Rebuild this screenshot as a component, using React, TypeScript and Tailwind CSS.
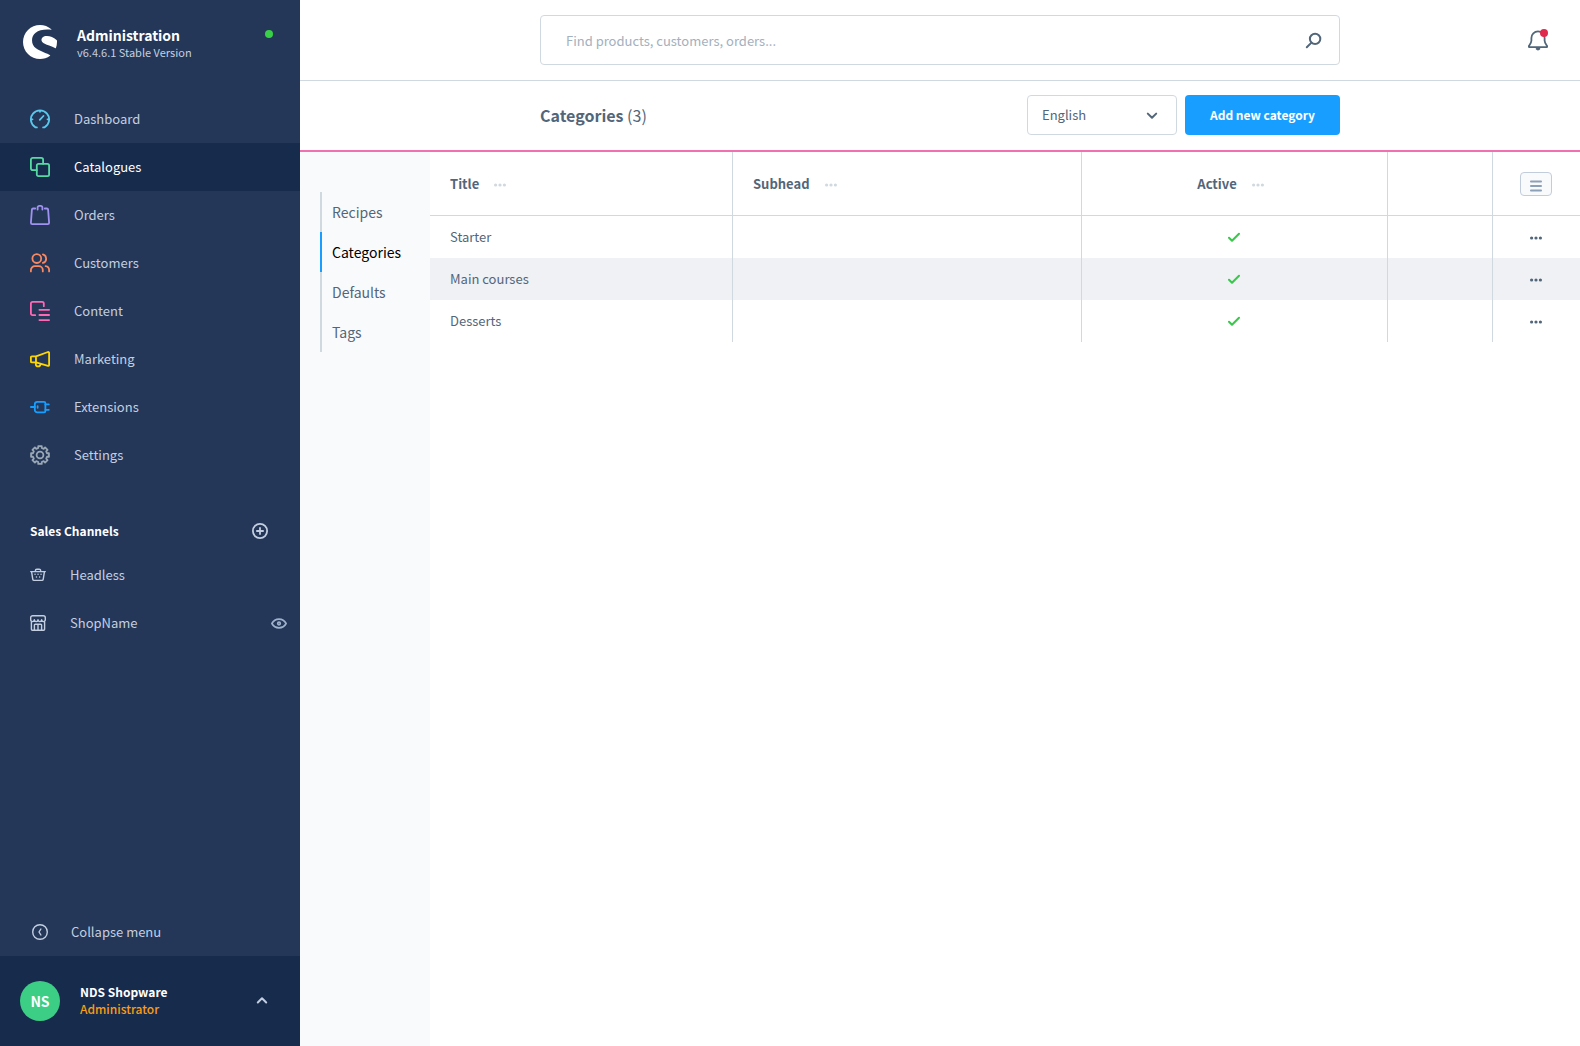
import { useState } from "react";
import type { ReactNode } from "react";
import { SiShopware } from "react-icons/si";

const navItems = [
  { label: "Dashboard", color: "text-[#5ac8eb]", icon: <DashboardIcon /> },
  { label: "Catalogues", color: "text-[#57d9a3]", icon: <CataloguesIcon /> },
  { label: "Orders", color: "text-[#a092f0]", icon: <OrdersIcon /> },
  { label: "Customers", color: "text-[#f88962]", icon: <CustomersIcon /> },
  { label: "Content", color: "text-[#ff68b4]", icon: <ContentIcon /> },
  { label: "Marketing", color: "text-[#ffd700]", icon: <MarketingIcon /> },
  { label: "Extensions", color: "text-[#189eff]", icon: <ExtensionsIcon /> },
  { label: "Settings", color: "text-[#9aa8b5]", icon: <SettingsIcon /> },
];

const sideTabs = ["Recipes", "Categories", "Defaults", "Tags"];

const categories = [
  { title: "Starter", subhead: "", active: true },
  { title: "Main courses", subhead: "", active: true },
  { title: "Desserts", subhead: "", active: true },
];

type IconProps = { children: ReactNode; size?: string; box?: string; width?: number };

function Icon({ children, size = "size-5", box = "0 0 20 20", width = 1.8 }: IconProps) {
  return (
    <svg
      className={`${size} shrink-0`}
      viewBox={box}
      fill="none"
      stroke="currentColor"
      strokeWidth={width}
      strokeLinecap="round"
      strokeLinejoin="round"
      aria-hidden="true"
    >
      {children}
    </svg>
  );
}

function DashboardIcon() {
  return (
    <Icon>
      <path d="M6.9 18.4H5.5a9.1 9.1 0 1 1 9 0h-1.4M10 1.4v1.4M1 10.3h1.5M19 10.3h-1.5M9.8 10.8l3.6-3.8" />
    </Icon>
  );
}

function CataloguesIcon() {
  return (
    <Icon>
      <path d="M6.8 13.1h-4a1.9 1.9 0 0 1-1.9-1.900V2.800A1.900 1.900 0 0 1 2.800.9h8.400a1.900 1.900 0 0 1 1.900 1.900v4" />
      <rect x="6.8" y="6.8" width="12.3" height="12.3" rx="1.6" />
    </Icon>
  );
}

function OrdersIcon() {
  return (
    <Icon>
      <path d="M5.2 3.5H3.100a1.200 1.200 0 0 0-1.200 1.100L.9 17.800a1.300 1.300 0 0 0 1.300 1.300h15.600a1.300 1.300 0 0 0 1.300-1.300l-1-13.200a1.200 1.200 0 0 0-1.200-1.100h-2.100" />
      <path d="M7.6 4.6V2.600A1.700 1.700 0 0 1 9.300.9h1.400a1.700 1.700 0 0 1 1.700 1.700v2" />
    </Icon>
  );
}

function CustomersIcon() {
  return (
    <Icon>
      <circle cx="6.8" cy="5.600" r="4.400" />
      <path d="M.9 18.400v-1.300a4 4 0 0 1 4-4h3.900a4 4 0 0 1 4 4v1.300M12.900 1.400a4.400 4.400 0 0 1 0 8.500M15.600 13.100a4 4 0 0 1 3.500 4v1.300" />
    </Icon>
  );
}

function ContentIcon() {
  return (
    <Icon>
      <path d="M5.200 14.200H2.500A1.600 1.600 0 0 1 .9 12.600V2.500A1.600 1.600 0 0 1 2.500.9h9.700a1.600 1.600 0 0 1 1.600 1.600v2.700M9.400 8.800h9.700M9.400 14h9.700M9.400 19.100h9.700" />
    </Icon>
  );
}

function MarketingIcon() {
  return (
    <Icon>
      <path d="M6 7.4v6M6 7.4H1.9a1 1 0 0 0-1 1v4a1 1 0 0 0 1 1H6l12 3.500a.9.9 0 0 0 1.100-.9V3.900A.9.9 0 0 0 18 3zM5.800 13.600v1.600a2.300 2.200 0 0 0 4.600 0v-.4" />
    </Icon>
  );
}

function ExtensionsIcon() {
  return (
    <Icon>
      <path d="M.9 10h4M7.600 9.200v1.600M15.400 7.400h3.400M15.400 12.800h3.400" />
      <path d="M7.200 4.800H14a1.400 1.400 0 0 1 1.400 1.400V14a1.400 1.400 0 0 1-1.400 1.400H7.200A2.400 2.400 0 0 1 4.800 13V7.200a2.400 2.400 0 0 1 2.400-2.400z" />
    </Icon>
  );
}

// eight-toothed cog, one tooth every 45 degrees
function cogPath() {
  const points: string[] = [];
  for (let i = 0; i < 8; i++) {
    const corners = [
      [-14, 7.2],
      [-11, 9.1],
      [11, 9.1],
      [14, 7.2],
    ];
    corners.forEach(([offset, radius]) => {
      const a = ((i * 45 + offset) * Math.PI) / 180;
      points.push(`${(10 + radius * Math.sin(a)).toFixed(2)} ${(10 - radius * Math.cos(a)).toFixed(2)}`);
    });
  }
  return `M${points.join("L")}Z`;
}

function SettingsIcon() {
  return (
    <Icon>
      <path d={cogPath()} />
      <circle cx="10" cy="10" r="3.4" />
    </Icon>
  );
}

function BasketIcon() {
  return (
    <Icon size="size-4" box="0 0 16 16" width={1.4}>
      <path d="M.7 4.600h14.600M1.600 4.800l1.200 7.600a1.200 1.200 0 0 0 1.200 1h8a1.200 1.200 0 0 0 1.200-1l1.200-7.600M5.400 4.400v-.8a1.400 1.400 0 0 1 1.400-1.400h2.400a1.400 1.400 0 0 1 1.400 1.400v.8" />
      <path d="M5 7.200h.1M8 7.200h.1M11 7.200h.1M6.400 10h.1M9.600 10h.1" />
    </Icon>
  );
}

function ShopIcon() {
  return (
    <Icon size="size-4" box="0 0 16 16" width={1.4}>
      <path d="M1.400 7v7.300a1 1 0 0 0 1 1h11.200a1 1 0 0 0 1-1V7M2.700.7h10.600a2 2 0 0 1 2 2v2.100a1.800 1.800 0 0 1-3.650 0 1.800 1.800 0 0 1-3.650 0 1.800 1.800 0 0 1-3.650 0 1.800 1.800 0 0 1-3.650 0V2.700a2 2 0 0 1 2-2z" />
      <path d="M4.400 15.200V10a.8.8 0 0 1 .8-.8h5.600a.8.8 0 0 1 .8.8v5.200M8 9.200v6" />
    </Icon>
  );
}

function DotsIcon() {
  return (
    <svg className="h-4 w-3 shrink-0" viewBox="0 0 12 16" fill="currentColor" aria-hidden="true">
      <circle cx="1.6" cy="9" r="1.6" />
      <circle cx="6" cy="9" r="1.6" />
      <circle cx="10.4" cy="9" r="1.6" />
    </svg>
  );
}

const Sidebar = () => {
  const [activeItem, setActiveItem] = useState("Catalogues");

  return (
    <aside className="flex w-[300px] shrink-0 flex-col bg-[#243758] text-[#c3cfe0]">
      <div className="flex items-start gap-5 px-[23px] pt-[25px]">
        <SiShopware className="size-[34px] shrink-0 text-white" aria-hidden="true" />
        <div className="flex-1">
          <p className="text-[14px] leading-5 font-bold text-white">Administration</p>
          <p className="text-[11px] leading-[14px] text-[#c3cfe0]">v6.4.6.1 Stable Version</p>
        </div>
        <span className="mt-[5px] mr-1 size-2 rounded-full bg-[#37d046]" />
      </div>

      <nav className="mt-9">
        {navItems.map((item) => (
          <a
            key={item.label}
            href="#"
            onClick={() => setActiveItem(item.label)}
            className={`flex h-12 items-center gap-6 px-[30px] text-[13px] ${
              item.label === activeItem ? "bg-[#172b4d] text-white" : ""
            }`}
          >
            <span className={item.color}>{item.icon}</span>
            {item.label}
          </a>
        ))}
      </nav>

      <div className="mt-[34px] flex h-9 items-center justify-between pr-8 pl-[30px]">
        <h2 className="text-[12px] font-bold text-white">Sales Channels</h2>
        <button aria-label="Add sales channel">
          <Icon size="size-4" box="0 0 16 16" width={1.8}>
            <circle cx="8" cy="8" r="7.1" />
            <path d="M8 4.9v6.2M4.9 8h6.2" />
          </Icon>
        </button>
      </div>
      <a href="#" className="mt-[2px] flex h-12 items-center gap-6 px-[30px] text-[13px]">
        <BasketIcon />
        Headless
      </a>
      <div className="flex h-12 items-center justify-between pr-[13px] pl-[30px]">
        <a href="#" className="flex items-center gap-6 text-[13px]">
          <ShopIcon />
          ShopName
        </a>
        <button aria-label="Open storefront" className="text-[#9fb1cb]">
          <Icon size="size-4" box="0 0 16 16" width={1.7}>
            <path d="M.9 8.500C2.400 5.700 5 4.200 8 4.200s5.600 1.500 7.100 4.300c-1.500 2.800-4.100 4.300-7.100 4.300S2.400 11.300.9 8.500z" />
            <circle cx="8" cy="8.500" r="1.300" />
          </Icon>
        </button>
      </div>

      <button className="mt-auto flex h-12 items-center gap-[23px] px-8 text-[13px]">
        <Icon size="size-4" box="0 0 16 16" width={1.4}>
          <circle cx="8" cy="8" r="7.3" />
          <path d="M8.9 5 7 8l1.9 3" />
        </Icon>
        Collapse menu
      </button>
      <button className="flex h-[90px] items-center gap-5 bg-[#172b4d] pr-8 pl-5 text-left">
        <span className="flex size-10 items-center justify-center rounded-full bg-[#3cce85] text-[14px] font-bold text-white">
          NS
        </span>
        <span className="flex-1">
          <span className="block text-[12px] leading-4 font-bold text-white">NDS Shopware</span>
          <span className="block text-[12px] leading-[18px] font-medium text-[#f99d15]">Administrator</span>
        </span>
        <Icon size="size-3" box="0 0 12 12" width={2}>
          <path d="M1.8 7.5 6 3.3l4.2 4.2" />
        </Icon>
      </button>
    </aside>
  );
};

const TopBar = () => (
  <header className="relative flex h-[81px] shrink-0 justify-center border-b border-[#d1d9e0] pt-[15px]">
    <div className="flex h-[50px] w-[800px] items-center rounded border border-[#d1d9e0] pr-[17px] pl-[25px]">
      <input
        type="search"
        aria-label="Search"
        placeholder="Find products, customers, orders..."
        className="h-full flex-1 text-[13px] text-[#52667a] outline-none placeholder:text-[#a3b0bd]"
      />
      <button aria-label="Start search" className="text-[#52667a]">
        <Icon size="size-[17px]" box="0 0 17 17" width={2}>
          <circle cx="10.1" cy="6.9" r="5.2" />
          <path d="M6.2 10.9 1.8 15.3" />
        </Icon>
      </button>
    </div>
    <button aria-label="Notifications" className="absolute top-[29px] right-8 text-[#52667a]">
      <Icon size="h-[22px] w-5" box="0 0 20 22" width={1.8}>
        <path d="M1.6 18.2h16.8a.8.8 0 0 0 .7-1.200c-1.500-2.200-2.500-3.500-2.500-5.200V9a6.600 6.600 0 0 0-13.200 0v2.800c0 1.700-1 3-2.500 5.200a.8.8 0 0 0 .7 1.200z" />
        <path d="M8.600 19.800a1.600 1.400 0 0 0 2.800 0z" fill="currentColor" />
      </Icon>
      <span className="absolute top-0 right-0 size-2 rounded-full bg-[#de294c]" />
    </button>
  </header>
);

const PageHead = () => (
  <div className="flex h-[71px] shrink-0 justify-center border-b-2 border-[#f071b0] pt-[14px]">
    <div className="flex w-[800px] items-start gap-2">
      <h1 className="flex-1 text-[16px] leading-10 text-[#52667a]">
        <b>Categories</b> (3)
      </h1>
      <div className="relative w-[150px] text-[#52667a]">
        <select
          aria-label="Language"
          className="h-10 w-full appearance-none rounded border border-[#d1d9e0] bg-white px-[14px] text-[13px]"
        >
          <option>English</option>
        </select>
        <span className="pointer-events-none absolute top-[14px] right-[19px]">
          <Icon size="size-3" box="0 0 12 12" width={2}>
            <path d="M1.8 4.600 6 8.800l4.200-4.200" />
          </Icon>
        </span>
      </div>
      <button className="h-10 w-[155px] rounded bg-[#189eff] text-[12px] font-bold text-white">
        Add new category
      </button>
    </div>
  </div>
);

const HeadCell = ({ label, center }: { label: string; center?: boolean }) => (
  <th className="border-r border-b border-[#d1d9e0] px-5">
    <div className={`flex items-center gap-[15px] ${center ? "justify-center pr-2" : ""}`}>
      {label}
      <button aria-label={`${label} column options`} className="text-[#d1d9e0]">
        <DotsIcon />
      </button>
    </div>
  </th>
);

const CategoryTable = () => (
  <table className="w-full table-fixed border-separate border-spacing-0 text-[13px] text-[#52667a]">
    <colgroup>
      <col className="w-[303px]" />
      <col />
      <col className="w-[306px]" />
      <col className="w-[105px]" />
      <col className="w-[87px]" />
    </colgroup>
    <thead>
      <tr className="h-16">
        <HeadCell label="Title" />
        <HeadCell label="Subhead" />
        <HeadCell label="Active" center />
        <th className="border-r border-b border-[#d1d9e0]" />
        <th className="border-b border-[#d1d9e0] pr-px">
          <button
            aria-label="List settings"
            className="mx-auto flex h-6 w-8 items-center justify-center rounded border border-[#c2cddb] bg-[#f9fafb] pt-1 text-[#8ca0b8]"
          >
            <Icon size="size-3" box="0 0 12 12" width={1.8}>
              <path d="M.9 1.500h10.200M.9 6h10.200M.9 10.500h10.200" />
            </Icon>
          </button>
        </th>
      </tr>
    </thead>
    <tbody>
      {categories.map((category) => (
        <tr key={category.title} className="h-[42px] even:bg-[#eff1f5]">
          <td className="border-r border-[#d1d9e0] px-5">{category.title}</td>
          <td className="border-r border-[#d1d9e0] px-5">{category.subhead}</td>
          <td className="border-r border-[#d1d9e0] pr-px text-[#37c84a]">
            {category.active && (
              <span className="flex justify-center">
                <Icon size="size-3" box="0 0 12 12" width={2}>
                  <path d="M1 6.8l3 3 7-7" />
                </Icon>
              </span>
            )}
          </td>
          <td className="border-r border-[#d1d9e0]" />
          <td className="pr-px">
            <button aria-label={`${category.title} actions`} className="mx-auto block">
              <DotsIcon />
            </button>
          </td>
        </tr>
      ))}
    </tbody>
  </table>
);

export default function App() {
  const [activeTab, setActiveTab] = useState("Categories");

  return (
    <div className="flex min-h-screen bg-white font-['Noto_Sans_CJK_SC','Open_Sans',sans-serif]">
      <Sidebar />
      <main className="flex min-w-0 flex-1 flex-col">
        <TopBar />
        <PageHead />
        <div className="flex flex-1">
          <nav className="w-[130px] shrink-0 bg-[#f9fafb] pt-10 pl-5">
            {sideTabs.map((tab) => (
              <a
                key={tab}
                href="#"
                onClick={() => setActiveTab(tab)}
                className={`flex h-10 items-center border-l-2 pl-[10px] text-[14px] ${
                  tab === activeTab ? "border-[#189eff] text-black" : "border-[#d1d9e0] text-[#52667a]"
                }`}
              >
                {tab}
              </a>
            ))}
          </nav>
          <section className="min-w-0 flex-1">
            <CategoryTable />
          </section>
        </div>
      </main>
    </div>
  );
}
